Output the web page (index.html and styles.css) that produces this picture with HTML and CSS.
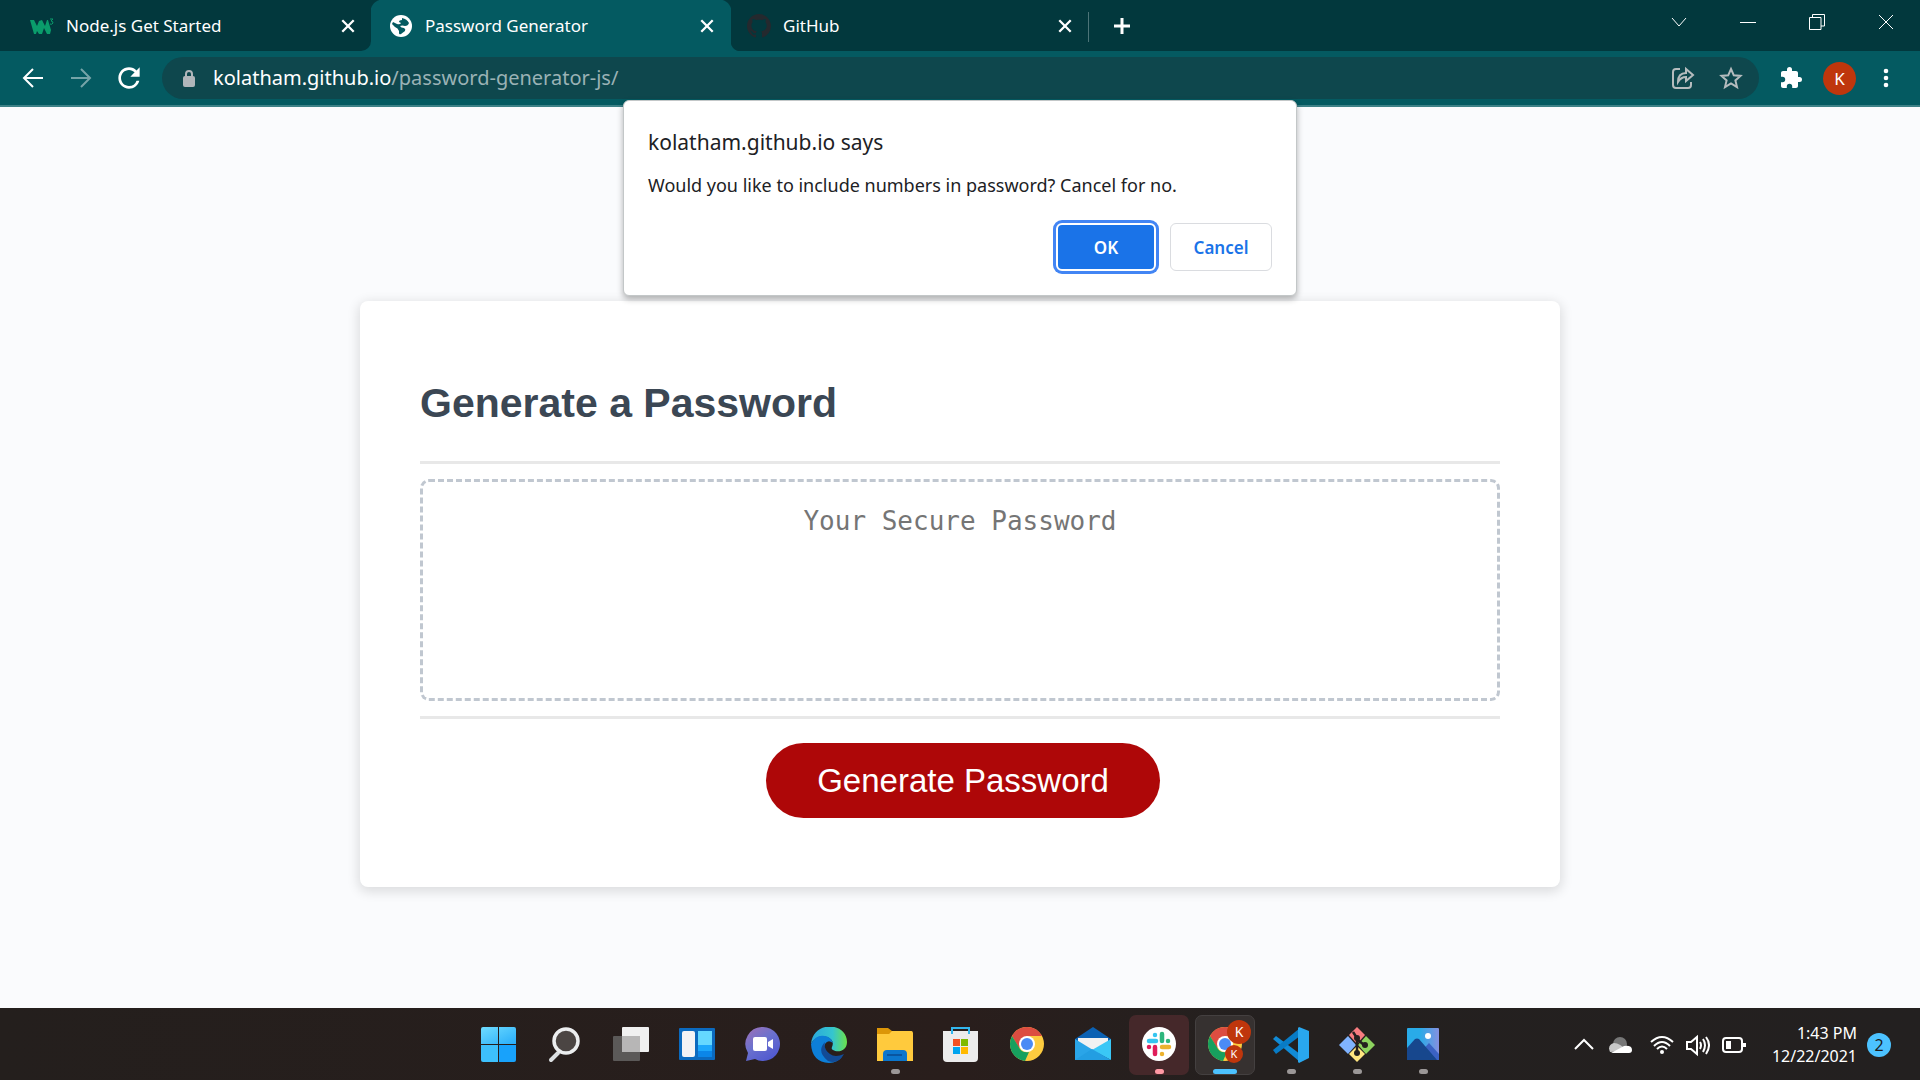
FILE: index.html
```html
<!DOCTYPE html>
<html lang="en">
<head>
<meta charset="utf-8">
<meta name="viewport" content="width=device-width, initial-scale=1">
<title>Password Generator</title>
<link rel="stylesheet" href="styles.css">
</head>
<body>
<div class="desktop">
  <header class="browser">
    <div class="tab-strip">
      <div class="tab">
        <svg class="favicon" viewBox="0 0 24 24" aria-hidden="true"><path d="M0 6h4l3 6 2-5 3-1 3 6 2-6h1l3 10-1 4h-3l-3-6-2 6H9l-2-3-1 3H4z" fill="#0a9c6b"/><path d="M20 5h3l-2 2q2 0 2 2-1 2-3 1" fill="none" stroke="#0a9c6b" stroke-width="1"/></svg>
        <span class="tab-title">Node.js Get Started</span>
        <button class="tab-close" aria-label="Close tab"><svg viewBox="0 0 14 14"><path d="M2 2l10 10M12 2L2 12"/></svg></button>
      </div>
      <div class="tab tab-active">
        <svg class="favicon" viewBox="0 0 24 24" aria-hidden="true"><circle cx="12" cy="12" r="11" fill="#fff"/><path d="M13 4q5 1 7 5-1 3-4 3-3-1-5 0 1 2 4 2 2 1 1 3l-4 3q-2 1-2-1v-2q-1-3-4-4l-3-3 1-2 4 2q3 1 4-1l-2-1q0-2 3-2z" fill="#045a61"/></svg>
        <span class="tab-title">Password Generator</span>
        <button class="tab-close" aria-label="Close tab"><svg viewBox="0 0 14 14"><path d="M2 2l10 10M12 2L2 12"/></svg></button>
      </div>
      <div class="tab tab-last">
        <svg class="favicon" viewBox="0 0 16 16" aria-hidden="true"><path fill="#24292e" d="M8 0C3.580 0 0 3.580 0 8c0 3.540 2.290 6.530 5.470 7.590.4.070.55-.17.55-.38 0-.19-.01-.82-.01-1.490-2.010.37-2.530-.49-2.690-.94-.09-.23-.48-.94-.82-1.130-.28-.15-.68-.52-.01-.53.63-.01 1.080.58 1.230.82.72 1.210 1.870.87 2.330.66.070-.52.28-.87.51-1.070-1.780-.2-3.640-.89-3.640-3.950 0-.87.31-1.590.82-2.150-.08-.2-.36-1.020.08-2.120 0 0 .67-.21 2.200.82.64-.18 1.320-.27 2-.27s1.360.09 2 .27c1.530-1.040 2.200-.82 2.200-.82.44 1.100.16 1.920.08 2.120.51.56.82 1.270.82 2.150 0 3.070-1.870 3.750-3.650 3.950.29.25.54.73.54 1.480 0 1.070-.01 1.930-.01 2.200 0 .21.15.46.55.38A8.010 8.010 0 0 0 16 8c0-4.420-3.580-8-8-8z"/></svg>
        <span class="tab-title">GitHub</span>
        <button class="tab-close" aria-label="Close tab"><svg viewBox="0 0 14 14"><path d="M2 2l10 10M12 2L2 12"/></svg></button>
      </div>
      <button class="new-tab" aria-label="New tab"><svg viewBox="0 0 18 18"><path d="M9 1v16M1 9h16"/></svg></button>
      <div class="window-controls">
        <button aria-label="Search tabs"><svg viewBox="0 0 16 16"><path d="M1 4l7 8 7-8"/></svg></button>
        <button aria-label="Minimize"><svg viewBox="0 0 16 16"><path d="M0 8.500h16"/></svg></button>
        <button aria-label="Restore"><svg viewBox="0 0 16 16"><path d="M.5 3.500h11.500v12H.5zM3.500 3.500V.5h12v11.500H12"/></svg></button>
        <button aria-label="Close"><svg viewBox="0 0 16 16"><path d="M1 1l14 14M15 1L1 15"/></svg></button>
      </div>
    </div>
    <div class="toolbar">
      <button class="nav" aria-label="Back"><svg viewBox="0 0 24 24"><path d="M22 12H3M12 3l-9 9 9 9"/></svg></button>
      <button class="nav nav-off" aria-label="Forward" disabled><svg viewBox="0 0 24 24"><path d="M2 12h19M12 3l9 9-9 9"/></svg></button>
      <button class="nav" aria-label="Reload"><svg viewBox="3 3 18 18"><path class="solid" d="M17.650 6.350A7.960 7.960 0 0 0 12 4c-4.420 0-7.990 3.580-7.990 8s3.570 8 7.990 8c3.730 0 6.840-2.550 7.730-6h-2.080A5.990 5.990 0 0 1 12 18c-3.310 0-6-2.690-6-6s2.690-6 6-6c1.660 0 3.140.69 4.220 1.780L13 11h7V4l-2.350 2.350z"/></svg></button>
      <div class="omnibox">
        <svg class="lock" viewBox="0 0 14 18" aria-hidden="true"><rect x="1" y="7" width="12" height="11" rx="2" fill="#b0b6ba"/><path d="M4 8V5a3 3 0 0 1 6 0v3" fill="none" stroke="#b0b6ba" stroke-width="2"/></svg>
        <div class="url" role="textbox" contenteditable="true" spellcheck="false" aria-label="Address">kolatham.github.io<span class="url-path">/password-generator-js/</span></div>
        <button class="omni-icon" aria-label="Share"><svg viewBox="0 0 24 24"><path d="M9 3H5Q2 3 2 6v13q0 3 3 3h12q3 0 3-3v-3"/><path d="M7 16q0-9 8-9V3l7 6-7 6v-4q-5 0-8 5z"/></svg></button>
        <button class="omni-icon" aria-label="Bookmark this tab"><svg viewBox="0 0 24 24"><path d="M12 3l2.800 6.300 6.700.600-5.100 4.500 1.600 6.700-6-3.600-6 3.600 1.600-6.700L2.500 9.900l6.700-.600z"/></svg></button>
      </div>
      <button class="ext" aria-label="Extensions"><svg viewBox="0 0 24 24"><path fill="#fff" d="M20.500 11H19V7c0-1.100-.9-2-2-2h-4V3.500a2.500 2.500 0 0 0-5 0V5H4c-1.100 0-2 .9-2 2v3.800h1.500a2.700 2.700 0 0 1 0 5.400H2V20c0 1.100.9 2 2 2h3.800v-1.500a2.700 2.700 0 0 1 5.400 0V22H17c1.100 0 2-.9 2-2v-4h1.500a2.500 2.500 0 0 0 0-5z"/></svg></button>
      <button class="profile" aria-label="Profile">K</button>
      <button class="menu" aria-label="Menu"><svg viewBox="0 0 6 20"><circle cx="3" cy="3" r="2.300"/><circle cx="3" cy="10" r="2.300"/><circle cx="3" cy="17" r="2.300"/></svg></button>
    </div>
  </header>

  <main class="page">
    <section class="dialog" role="dialog" aria-labelledby="dialog-title">
      <h2 class="dialog-title" id="dialog-title">kolatham.github.io says</h2>
      <p class="dialog-text">Would you like to include numbers in password? Cancel for no.</p>
      <div class="dialog-actions">
        <button class="btn btn-ok">OK</button>
        <button class="btn">Cancel</button>
      </div>
    </section>
    <section class="card">
      <h1 class="card-title"><label for="password">Generate a Password</label></h1>
      <div class="card-body"><textarea class="password" id="password" readonly placeholder="Your Secure Password"></textarea></div>
      <div class="card-footer"><button class="generate">Generate Password</button></div>
    </section>
  </main>

  <footer class="taskbar">
    <nav class="apps" aria-label="Apps">
      <button class="app" aria-label="Start"><svg viewBox="0 0 36 36"><defs><linearGradient id="win" x1="0" y1="0" x2="1" y2="1" gradientUnits="objectBoundingBox"><stop offset="0" stop-color="#6fdcff"/><stop offset="1" stop-color="#28adfa"/></linearGradient></defs><path d="M2 0h15v17H0V2q0-2 2-2zM18 0h15q2 0 2 2v15H18z" fill="url(#win)"/><path d="M0 18h17v17H2q-2 0-2-2z" fill="#3dc0fc"/><path d="M18 18h17v15q0 2-2 2H18z" fill="#18a2fb"/></svg></button>
      <button class="app" aria-label="Search"><svg viewBox="0 0 36 36"><path d="M11 26l-7 7" stroke="#dce0e2" stroke-width="4" stroke-linecap="round"/><circle cx="19" cy="14" r="12" fill="#4b4543" stroke="#eceeef" stroke-width="3.500"/></svg></button>
      <button class="app" aria-label="Task view"><svg viewBox="0 0 36 36"><rect x="9" y="0" width="27" height="25" rx="1" fill="#f0f0f0"/><rect x="0" y="9" width="27" height="25" rx="1" fill="#5b5958"/><path d="M9 9h18v16H9z" fill="#b7b6b6"/></svg></button>
      <button class="app" aria-label="Widgets"><svg viewBox="0 0 36 36"><rect y="1" width="36" height="32" rx="1" fill="#0b6abf"/><rect x="3" y="4" width="13" height="26" rx="2" fill="#f3f3f5"/><path d="M19 4h14v14H19z" fill="#65d8ff"/><path d="M19 18h14v6H19z" fill="#1ca7fb"/><path d="M19 24h14v6H19z" fill="#0b86e8"/></svg></button>
      <button class="app" aria-label="Chat"><svg viewBox="0 0 36 36"><defs><linearGradient id="chat" x1="0" y1="0" x2=".7" y2="1"><stop offset="0" stop-color="#a070b5"/><stop offset=".5" stop-color="#6b71ce"/><stop offset="1" stop-color="#5059d0"/></linearGradient></defs><path d="M18 0a17 17 0 1 1-8 32L1 34l2-8A17 17 0 0 1 18 0z" fill="url(#chat)"/><rect x="8" y="10" width="14" height="14" rx="2" fill="#fff"/><path d="M23 15l5-3v10l-5-3z" fill="#fff"/></svg></button>
      <button class="app" aria-label="Edge"><svg viewBox="0 0 36 36"><defs><linearGradient id="edge"><stop offset="0" stop-color="#2aa7dc"/><stop offset=".6" stop-color="#35c5cf"/><stop offset="1" stop-color="#6be24b"/></linearGradient></defs><path d="M0 17C2-7 36-5 36 15c0 9-9 11-14 8q-2-1-1-3 3-7-5-10Q6 7 0 17z" fill="url(#edge)"/><path d="M0 17Q5 7 14 9q6 1 8 7-5-4-8 1-4 9 4 13 6 3 14-2-5 8-14 8Q1 35 0 17z" fill="#0d7fd8"/><path d="M14 15q-9 9 3 19 10 4 16-7-9 4-14 0-7-5-5-12z" fill="#124b96"/></svg></button>
      <button class="app app-open" aria-label="File Explorer"><svg viewBox="0 0 36 36"><path d="M0 10V1h11l4 3h20v6z" fill="#dc9608"/><path d="M0 7h12l3-3h19q2 0 2 2v28H0z" fill="#ffca3d"/><path d="M6 34V27q0-4 4-4h16q4 0 4 4v7z" fill="#0b76cd"/><path d="M10 28h15" stroke="#0a4b90" stroke-width="1.500"/></svg></button>
      <button class="app" aria-label="Microsoft Store"><svg viewBox="0 0 36 36"><path d="M0 4h35v27q0 4-4 4H4q-4 0-4-4z" fill="#ececec"/><path d="M9 7V1h17v6" fill="none" stroke="#32b6ed" stroke-width="2"/><path d="M10 12h7v7h-7z" fill="#f25022"/><path d="M18 12h7v7h-7z" fill="#7fba00"/><path d="M10 20h7v7h-7z" fill="#00a4ef"/><path d="M18 20h7v7h-7z" fill="#ffb900"/></svg></button>
      <button class="app" aria-label="Chrome"><svg viewBox="0 0 36 36"><g id="chrome"><circle cx="18" cy="17" r="17" fill="#fdcb3f"/><path d="M3 9a17 17 0 0 1 30 0H18L10 21z" fill="#dc4d41"/><path d="M3 9l8 13q3 4 9 3l-4 9A17 17 0 0 1 3 9z" fill="#17a05e"/><circle cx="18" cy="17" r="8" fill="#fff"/><circle cx="18" cy="17" r="6" fill="#4b8bf5"/></g></svg></button>
      <button class="app" aria-label="Mail"><svg viewBox="0 0 36 36"><path d="M0 12L18 0l18 12v4H0z" fill="#0b61b3"/><path d="M3 11h30v10L18 28 3 21z" fill="#f2f2f2"/><path d="M0 12l18 11v10H0z" fill="#2aa5e8"/><path d="M36 12L17 23l19 10z" fill="#3ac7f6"/><path d="M17 22l19 11H0z" fill="#239ee2"/></svg></button>
      <button class="app app-open app-alert" aria-label="Slack"><svg viewBox="0 0 36 36"><circle cx="18" cy="17" r="17" fill="#fff"/><g stroke-width="4.500" stroke-linecap="round"><path d="M8 14h7M14 8v0" stroke="#36c5f0"/><path d="M21 7v7M27 14v0" stroke="#2eb67d"/><path d="M21 20h7M21 27v0" stroke="#ecb22e"/><path d="M14 20v7M8 20v0" stroke="#e01e5a"/></g></svg></button>
      <button class="app app-open app-current" aria-label="Chrome, Password Generator"><svg viewBox="0 0 36 36"><use href="#chrome"/></svg><span class="who who-large">K</span><span class="who">K</span></button>
      <button class="app app-open" aria-label="Visual Studio Code"><svg viewBox="0 0 36 36"><path d="M0 12l3-3 24 18v8z" fill="#118bd6"/><path d="M0 23l3 4L27 9V1z" fill="#087bc5"/><path d="M26 0l10 4v27l-10 5-1-1V1z" fill="#29a7ee"/></svg></button>
      <button class="app app-open" aria-label="Git"><svg viewBox="0 0 36 36"><path d="M18 0l8 8-8 9-8-9z" fill="#f77c80"/><path d="M9 9l8 9-8 9-9-9z" fill="#80b3ff"/><path d="M27 9l9 9-9 9-8-9z" fill="#8dd35f"/><path d="M18 19l8 8-8 8-8-8z" fill="#ffe680"/><path d="M14 5l4 6v15M18 12l7 6" stroke="#24201f" stroke-width="2.500" fill="none"/><circle cx="18" cy="11" r="3" fill="#24201f"/><circle cx="18" cy="26" r="3" fill="#24201f"/><circle cx="26" cy="18" r="3" fill="#24201f"/></svg></button>
      <button class="app app-open" aria-label="Photos"><svg viewBox="0 0 36 36"><defs><linearGradient id="sky"><stop offset=".4" stop-color="#29abe8"/><stop offset="1" stop-color="#8590e0"/></linearGradient></defs><rect x="2" y="1" width="32" height="32" rx="1" fill="url(#sky)"/><path d="M14 27l10-11 10 11v6H14z" fill="#3b62c4"/><path d="M2 21l8-9q2-1 4 0l18 21H2z" fill="#17478d"/><circle cx="23" cy="9" r="3" fill="#fff"/></svg></button>
    </nav>
    <div class="tray">
      <svg class="tray-icon" viewBox="0 0 24 24"><path d="M3 16l9-9 9 9"/></svg>
      <svg class="tray-icon" viewBox="0 0 24 24"><circle cx="12" cy="11" r="7" fill="#777" stroke="none"/><path d="M2 19q-3-7 4-9 6 0 13 8z" fill="#c8c8c8" stroke="none"/><path d="M3 20l13-7q8-1 8 4 0 3-3 3z" fill="#fff" stroke="none"/></svg>
      <svg class="tray-icon tray-wifi" viewBox="0 0 24 24"><path d="M1 9q11-10 22 0M4 13q8-8 16 0M7 16q5-5 10 0"/><circle cx="12" cy="19" r="2" fill="#fff" stroke="none"/></svg>
      <svg class="tray-icon" viewBox="0 0 24 24"><path d="M1 9h4l6-5v17l-6-5H1zM14 9q2 3 0 7M17 6q4 6 0 13M20 4q6 8 0 17"/></svg>
      <svg class="tray-icon" viewBox="0 0 24 24"><rect x="1" y="5" width="19" height="14" rx="3"/><path d="M4 8h5v8H4z" fill="#fff" stroke="none"/><path d="M21 12h3" stroke-width="4"/></svg>
      <div class="clock"><span>1:43 PM</span><span>12/22/2021</span></div>
      <span class="count">2</span>
    </div>
  </footer>
</div>
</body>
</html>
```
FILE: styles.css
```css
* { box-sizing: border-box; }
body { margin: 0; font-family: "Noto Sans", "Segoe UI", sans-serif; }
h1, h2, p { margin: 0; }
button { padding: 0; border: 0; background: none; color: inherit; font-family: inherit; }
svg { display: block; }

.desktop { display: flex; flex-direction: column; min-height: 100vh; }

/* Browser frame */
.browser { color: #fff; background: #045a61; }
.tab-strip { display: flex; height: 51px; background: #045a61; background: linear-gradient(#02383d, #02383d) right / calc(100% - 600px) 100% no-repeat #045a61; }
.tab { display: flex; flex: 0 1 360px; align-items: center; gap: 12px; padding: 0 16px 0 18px; background: #02383d; }
.tab:first-child { flex-basis: 371px; padding: 0 15px 0 30px; border-bottom-right-radius: 10px; }
.tab.tab-active { background: radial-gradient(circle at 12px 12px, #045a61 12px, #02383d 13px) left top / 12px 12px no-repeat, radial-gradient(circle at 0 12px, #045a61 12px, #02383d 13px) right top / 12px 12px no-repeat, #045a61; }
.tab-last { flex-basis: 358px; position: relative; padding-left: 16px; background: radial-gradient(circle at 10px 0, #02383d 10px, #045a61 11px) left bottom / 10px 10px no-repeat, #02383d; }
.tab-last::after { content: ""; position: absolute; right: 0; top: 12px; height: 30px; border-right: 1px solid #4c7478; }
.favicon { flex: none; width: 24px; height: 24px; }
.tab-title { flex: 1; font-size: 17px; line-height: 24px; white-space: nowrap; }
.tab-close svg { width: 16px; height: 16px; }
.tab-close path, .new-tab path { fill: none; stroke: #fff; stroke-width: 2; }
.new-tab { width: 66px; display: grid; place-items: center; }
.new-tab svg { width: 18px; height: 18px; }
.new-tab path { stroke-width: 3; }
.window-controls { display: flex; margin-left: auto; }
.window-controls button { width: 69px; height: 43px; display: grid; place-items: center; }
.window-controls svg { width: 16px; height: 16px; }
.window-controls path { fill: none; stroke: #fff; stroke-width: 1; }

.toolbar { display: flex; align-items: center; height: 56px; padding: 0 26px 0 21px; border-bottom: 2px solid #3d8187; }
.nav { width: 24px; margin-right: 24px; }
.nav svg { width: 24px; height: 24px; }
.nav path { fill: none; stroke: #fff; stroke-width: 2; }
.nav .solid { fill: #fff; stroke: none; }
.nav-off { opacity: .45; }
.omnibox { display: flex; flex: 1; align-items: center; height: 42px; margin: 0 20px 0 -3px; padding: 0 16px 0 20px; border-radius: 21px; background: #0e474d; }
.lock { width: 14px; height: 18px; margin-right: 17px; }
.url { flex: 1; font-size: 20px; line-height: 28px; outline: 0; }
.url-path { color: #9ab2b5; }
.omni-icon { margin-left: 24px; }
.omni-icon svg { width: 24px; height: 24px; }
.omni-icon path { fill: none; stroke: #b5bcbe; stroke-width: 2; }
.ext svg { width: 24px; height: 24px; }
.profile { width: 33px; height: 33px; margin: 0 22px 0 20px; border-radius: 50%; background: #bf360c; font-size: 17px; }
.menu { width: 16px; }
.menu svg { width: 6px; height: 20px; margin: auto; fill: #fff; }

/* Web page */
.page { position: relative; display: flex; flex: 1; align-items: center; justify-content: center; padding: 160px 24px 87px; background: #fafbfd; }
.card { width: 1200px; max-width: 100%; padding: 54px 60px 60px; border-radius: 8px; background: #fff; box-shadow: 0 3px 12px 2px rgba(0, 0, 0, .12); font-family: "Liberation Sans", Arial, sans-serif; }
.card-title { padding: 25px 0 35px; color: #3b4754; font-size: 41px; line-height: 46px; }
.card-body { padding: 15px 0; border-top: 3px solid #e8e8e8; border-bottom: 3px solid #e8e8e8; }
.password { display: block; width: 100%; height: 222px; padding: 21px 24px; border: 3px dashed #c0c7d0; border-radius: 9px; resize: none; outline: 0; background: #fff; text-align: center; font-family: "DejaVu Sans Mono", Consolas, monospace; font-size: 26px; line-height: 36px; }
.password::placeholder { color: #757575; }
.card-footer { display: flex; justify-content: center; padding: 24px 0 9px 6px; }
.generate { width: 394px; height: 75px; border-radius: 38px; background: #ae0708; color: #fff; font-size: 33px; }

.dialog { position: absolute; z-index: 1; top: -7px; left: 50%; width: 674px; max-width: 100%; transform: translateX(-50%); padding: 24px; border: 1px solid #c3c7c8; border-radius: 6px; background: #fff; box-shadow: 0 3px 6px rgba(0, 0, 0, .3); color: #202124; }
.dialog-title { font-size: 21px; font-weight: 400; line-height: 34px; }
.dialog-text { padding: 12px 0 24px; font-size: 18px; line-height: 28px; }
.dialog-actions { display: flex; justify-content: flex-end; gap: 14px; }
.btn { width: 102px; height: 48px; border: 1px solid #dadce0; border-radius: 6px; color: #1a73e8; font-size: 17px; font-weight: 600; }
.btn-ok { width: 100px; border: 2px solid #fff; background: #1a73e8; color: #fff; box-shadow: 0 0 0 3px #4285f4; }

/* Taskbar */
.taskbar { display: grid; grid-template-columns: 1fr auto 1fr; align-items: center; height: 72px; padding: 2px 0 0 2px; background: linear-gradient(90deg, #241f1d, #291e1c 50%, #24201f 65%, #232020); color: #fff; }
.apps { grid-column: 2; display: flex; gap: 6px; }
.app { position: relative; display: grid; place-items: center; width: 60px; height: 60px; border-radius: 7px; }
.app > svg { width: 36px; height: 36px; }
.app-open::after { content: ""; position: absolute; bottom: 1px; width: 9px; height: 5px; border-radius: 3px; background: #9b9797; }
.app-alert { background: #45282a; }
.app-alert::after { background: #ff99a4; }
.app-current { background: #363130; border: 1px solid #444040; }
.app-current::after { bottom: 0; width: 24px; background: #4cc2ff; }
.who { position: absolute; right: 11px; bottom: 11px; width: 18px; height: 18px; border-radius: 50%; background: #bf360c; font-size: 11px; line-height: 18px; text-align: center; }
.who-large { top: 4px; right: 3px; width: 24px; height: 24px; font-size: 14px; line-height: 24px; }
.tray { display: flex; justify-content: flex-end; align-items: center; gap: 12px; padding-right: 29px; }
.tray-icon { width: 24px; height: 24px; fill: none; stroke: #fff; stroke-width: 2; }
.tray-wifi { margin-left: 6px; }
.clock { display: flex; flex-direction: column; margin: 0 -2px 0 14px; text-align: right; font-size: 16px; line-height: 23px; }
.count { width: 24px; height: 24px; border-radius: 50%; background: #4cc2ff; color: #1b1b1b; text-align: center; font-size: 16px; line-height: 24px; }
```
